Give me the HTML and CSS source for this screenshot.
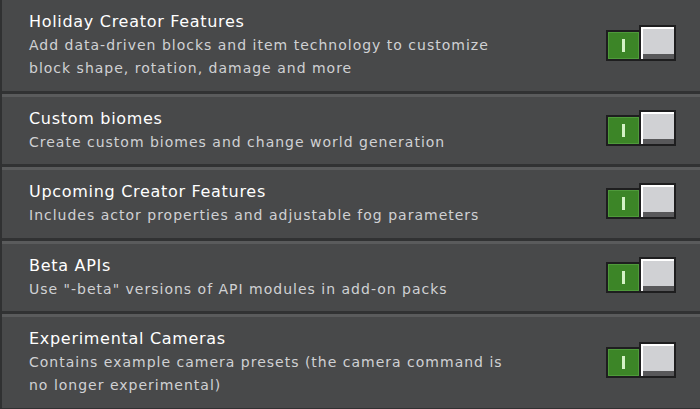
FILE: index.html
```html
<!DOCTYPE html>
<html lang="en">
<head>
<meta charset="utf-8">
<title>Experiments</title>
<link rel="stylesheet" href="styles.css">
</head>
<body>
<div class="list">
  <div class="row">
    <div class="text">
      <div class="title">Holiday Creator Features</div>
      <div class="desc">Add data-driven blocks and item technology to customize<br>block shape, rotation, damage and more</div>
    </div>
    <div class="toggle"><div class="track"><span class="mark"></span></div><div class="knob"></div></div>
  </div>
  <div class="row">
    <div class="text">
      <div class="title">Custom biomes</div>
      <div class="desc">Create custom biomes and change world generation</div>
    </div>
    <div class="toggle"><div class="track"><span class="mark"></span></div><div class="knob"></div></div>
  </div>
  <div class="row">
    <div class="text">
      <div class="title">Upcoming Creator Features</div>
      <div class="desc">Includes actor properties and adjustable fog parameters</div>
    </div>
    <div class="toggle"><div class="track"><span class="mark"></span></div><div class="knob"></div></div>
  </div>
  <div class="row">
    <div class="text">
      <div class="title">Beta APIs</div>
      <div class="desc">Use "-beta" versions of API modules in add-on packs</div>
    </div>
    <div class="toggle"><div class="track"><span class="mark"></span></div><div class="knob"></div></div>
  </div>
  <div class="row">
    <div class="text">
      <div class="title">Experimental Cameras</div>
      <div class="desc">Contains example camera presets (the camera command is<br>no longer experimental)</div>
    </div>
    <div class="toggle"><div class="track"><span class="mark"></span></div><div class="knob"></div></div>
  </div>
</div>
</body>
</html>
```
FILE: styles.css
```css
html, body {
  margin: 0;
  padding: 0;
  background: #48494a;
  height: 409px;
  overflow: hidden;
}
body {
  font-family: "DejaVu Sans", sans-serif;
  border-left: 2px solid #303132;
}
.list {
  display: flex;
  flex-direction: column;
}
.row {
  display: flex;
  align-items: center;
  justify-content: space-between;
  padding: 11px 24px 10.5px 27px;
  background: #48494a;
  border-bottom: 3px solid #313233;
}
.row + .row {
  border-top: 3px solid #5a5b5c;
}
.title {
  color: #ffffff;
  font-size: 16px;
  line-height: 20px;
  letter-spacing: 0.7px;
  margin-top: 1px;
  margin-bottom: 2px;
}
.desc {
  color: #d0d1d4;
  font-size: 14px;
  line-height: 23px;
  letter-spacing: 1px;
}
.toggle {
  display: flex;
  align-items: flex-end;
  height: 36px;
  margin-bottom: 6px;
}
.track {
  width: 35px;
  height: 31px;
  box-sizing: border-box;
  background: #3c8527;
  border: 2px solid #1e1e1f;
  box-shadow: inset 0 0 0 1px #4f9a3b;
  display: flex;
  align-items: center;
  justify-content: center;
}
.mark {
  width: 3px;
  height: 13px;
  background: #d4f2c6;
}
.knob {
  width: 37px;
  height: 36px;
  box-sizing: border-box;
  margin-left: -2px;
  border: 2px solid #1e1e1f;
  background: #d0d1d4;
  box-shadow: inset 2px 2px 0 #ffffff, inset 0 -5px 0 #58585a;
}
```
